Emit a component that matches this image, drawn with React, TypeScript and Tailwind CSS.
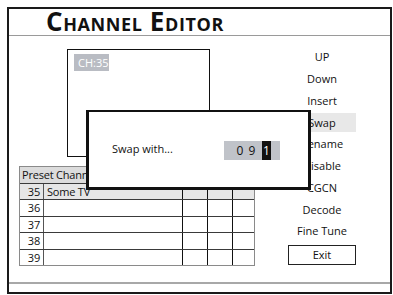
import React from "react";

const menu = ["UP", "Down", "Insert", "Swap", "Rename", "Disable", "CGCN", "Decode", "Fine Tune"];
const rows = ["36", "37", "38", "39"];

function Row({ num, name, shaded }: { num: string; name?: string; shaded?: boolean }) {
  return (
    <div className={`flex h-[16.5px] border-t border-[#3a3a3a] ${shaded ? "bg-[#e6e6e6]" : ""}`}>
      <div className="w-[24px] pr-[3px] text-right leading-[16px] border-r border-[#555]">{num}</div>
      <div className="w-[139px] pl-[3px] leading-[16px] border-r border-[#111]">{name}</div>
      <div className="w-[25px] border-r border-[#111]" />
      <div className="w-[25px] border-r border-[#111]" />
      <div className="flex-1" />
    </div>
  );
}

export default function App() {
  return (
    <div className="w-[393px] h-[295px] bg-white pt-[7px] pl-[7px] text-[#111] font-['Open_Sans',sans-serif] overflow-hidden">
      <div className="relative w-[385px] h-[287px] border-2 border-[#1a1a1a] flex flex-col">
        {/* title */}
        <div className="h-[27px] shrink-0 border-b border-[#9a9a9a] pl-[37px] flex items-end">
          <span className="text-[26px] font-bold leading-none tracking-[0.6px] [font-variant:small-caps] font-['Open_Sans',sans-serif] pb-[1px]">
            Channel Editor
          </span>
        </div>

        <div className="flex-1 flex">
          {/* left column */}
          <div className="w-[245px] pl-[10px] pt-[13px]">
            <div className="ml-[48px] w-[143px] h-[108px] border border-[#111] pt-[4px] pl-[6px]">
              <div className="w-[35px] h-[17px] bg-[#b9bcc3] text-white text-[11px] leading-[17px] pl-[4px]">CH:35</div>
            </div>
            <div className="mt-[9px] w-[236px] border border-[#8a8a8a] border-t-0 text-[11px] tracking-[-0.2px]">
              <div className="h-[16.5px] border-t border-[#8a8a8a] bg-[#dcdcdc] pl-[2px] leading-[16px]">Preset Channel</div>
              <Row num="35" name="Some TV" shaded />
              {rows.map((r) => (
                <Row key={r} num={r} />
              ))}
            </div>
          </div>

          {/* menu */}
          <div className="ml-[34px] w-[68px] pt-[10px] text-[11px]">
            {menu.map((m) => (
              <div key={m} className="h-[21.75px] flex items-center">
                <div className={`w-full h-[19px] leading-[19px] text-center ${m === "Swap" ? "bg-[#e8e8e8]" : ""}`}>{m}</div>
              </div>
            ))}
            <div className="mt-[3px] h-[20px] border border-[#222] text-center leading-[18px]">Exit</div>
          </div>
        </div>

        {/* footer */}
        <div className="h-[10px] shrink-0 border-t-2 border-[#a8a8a8]" />

        {/* swap dialog */}
        <div className="absolute left-[77px] top-[101px] w-[225px] h-[80px] bg-white border-[#111] border-t-2 border-l-[3px] border-r-[3px] border-b-[3px] flex items-center pl-[23px] pr-[28px]">
          <span className="text-[11px]">Swap with...</span>
          <div className="ml-auto mt-[2px] w-[56px] h-[19px] bg-[#c0c3c9] flex items-center justify-end pr-[9px] text-[12px]">
            <span className="w-[12px] text-center">0</span>
            <span className="w-[12px] text-center">9</span>
            <span className="ml-[4px] w-[9px] h-[19px] bg-[#111] text-white text-center leading-[19px]">1</span>
          </div>
        </div>
      </div>
    </div>
  );
}
